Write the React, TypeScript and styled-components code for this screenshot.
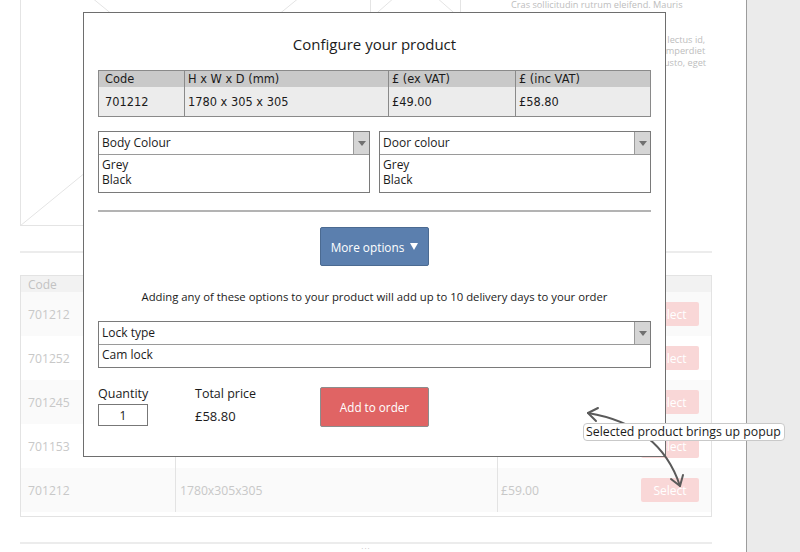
import styled, { createGlobalStyle } from 'styled-components';

const GlobalStyle = createGlobalStyle`
  * {
    box-sizing: border-box;
  }
  html,
  body {
    margin: 0;
    padding: 0;
    background: #ffffff;
  }
  body {
    font-family: 'Open Sans', 'Liberation Sans', sans-serif;
  }
`;

const Page = styled.div`
  position: relative;
  display: flex;
  width: 800px;
  height: 552px;
  overflow: hidden;
  background: #ffffff;
`;

const Main = styled.main`
  flex: none;
  width: 746px;
  padding: 0 34px 0 20px;
  display: flex;
  flex-direction: column;
`;

const Sidebar = styled.aside`
  flex: 1;
  background: #ebebeb;
  border-left: 1px solid #9c9c9c;
`;

/* faded page behind the popup */

const Hero = styled.section`
  flex: none;
  display: flex;
  align-items: flex-start;
  height: 287px;
  margin-top: -61px;
`;

const PlaceholderSvg = styled.svg<{ $overlap?: boolean }>`
  display: block;
  flex: none;
  margin-left: ${(p) => (p.$overlap ? '-1px' : '0')};
`;

const Blurb = styled.div`
  margin-left: 50px;
  padding-top: 60px;
  width: 220px;
  font-size: 9.2px;
  line-height: 11.5px;
  color: #bdbdbd;
  white-space: nowrap;
`;

const BlurbPara = styled.p`
  margin: 0 0 23px;
`;

const BlurbLine = styled.span`
  display: block;
`;

const Rule = styled.div<{ $top: number }>`
  flex: none;
  margin-top: ${(p) => p.$top}px;
  border-top: 2px solid #ececec;
`;

const ProductTable = styled.div`
  flex: none;
  margin-top: 22px;
  padding-bottom: 4px;
  border: 1px solid #e3e3e3;
`;

const ProductRow = styled.div<{ $head?: boolean; $shade?: boolean }>`
  display: grid;
  grid-template-columns: 154px 322px 1fr;
  height: ${(p) => (p.$head ? 16 : 44)}px;
  background: ${(p) => (p.$head ? '#f2f2f2' : p.$shade ? '#fafafa' : '#ffffff')};
  font-size: ${(p) => (p.$head ? 12 : 12.2)}px;
  color: ${(p) => (p.$head ? '#c2c2c2' : '#c8c8c8')};
`;

const ProductCell = styled.div<{ $pad: number; $divider?: boolean }>`
  display: flex;
  align-items: center;
  padding-left: ${(p) => p.$pad}px;
  border-left: ${(p) => (p.$divider ? '1px solid #e3e3e3' : 'none')};
`;

const PriceCell = styled(ProductCell)`
  justify-content: space-between;
  padding-right: 12px;
`;

const GhostSelect = styled.span`
  width: 58px;
  height: 24px;
  border-radius: 2px;
  background: #f9d7d7;
  color: #ffffff;
  font-size: 12px;
  display: flex;
  align-items: center;
  justify-content: center;
`;

const Dots = styled.div`
  margin-top: -2px;
  text-align: center;
  font-size: 8px;
  line-height: 8px;
  letter-spacing: 1px;
  color: #c4c4c4;
`;

/* popup */

const Modal = styled.div`
  position: absolute;
  left: 83px;
  top: 12px;
  width: 583px;
  display: flex;
  flex-direction: column;
  padding: 21px 14px 29px;
  background: #ffffff;
  border: 1px solid #6e6e6e;
  color: #1b1b1b;
`;

const Title = styled.h2`
  margin: 0 0 1px;
  font-size: 15px;
  font-weight: 400;
  line-height: 20px;
  text-align: center;
`;

const SpecTable = styled.div`
  display: grid;
  grid-template-columns: 85px 204px 127px 1fr;
  margin-top: 15px;
  border: 1px solid #8a8a8a;
  font-family: 'DejaVu Sans', 'Open Sans', sans-serif;
  font-size: 11.4px;
`;

const SpecCell = styled.div<{ $head?: boolean; $first?: boolean }>`
  display: flex;
  align-items: center;
  height: ${(p) => (p.$head ? 16 : 29)}px;
  padding-left: ${(p) => (p.$first ? 6 : 3)}px;
  background: ${(p) => (p.$head ? '#c9c9c9' : '#ececec')};
  border-left: ${(p) => (p.$first ? 'none' : '1px solid #8a8a8a')};
`;

const SelectRow = styled.div`
  display: flex;
  gap: 9px;
  margin-top: 14px;
`;

const SelectBox = styled.div<{ $top?: number }>`
  flex: 1;
  margin-top: ${(p) => p.$top ?? 0}px;
  border: 1px solid #7a7a7a;
  font-size: 12px;
  background: #ffffff;
`;

const SelectHead = styled.div`
  display: flex;
  height: 23px;
  border-bottom: 1px solid #9a9a9a;
`;

const SelectLabel = styled.span`
  flex: 1;
  padding-left: 3px;
  line-height: 22px;
`;

const SelectToggle = styled.span`
  width: 16px;
  display: flex;
  align-items: center;
  justify-content: center;
  background: #d5d5d5;
  border-left: 1px solid #9a9a9a;
`;

const Caret = styled.span<{ $color?: string; $w?: number; $h?: number }>`
  width: 0;
  height: 0;
  border-left: ${(p) => (p.$w ?? 9) / 2}px solid transparent;
  border-right: ${(p) => (p.$w ?? 9) / 2}px solid transparent;
  border-top: ${(p) => p.$h ?? 5}px solid ${(p) => p.$color ?? '#707070'};
`;

const SelectList = styled.div<{ $height: number }>`
  height: ${(p) => p.$height}px;
  padding: 2px 3px 0;
  line-height: 15px;
`;

const Separator = styled.div`
  margin-top: 17px;
  border-top: 2px solid #b3b3b3;
`;

const ActionButton = styled.button<{ $tone: 'blue' | 'red'; $top: number }>`
  flex: none;
  align-self: ${(p) => (p.$tone === 'blue' ? 'center' : 'flex-start')};
  display: flex;
  align-items: center;
  justify-content: center;
  gap: 6px;
  width: 109px;
  height: ${(p) => (p.$tone === 'blue' ? 39 : 40)}px;
  margin-top: ${(p) => p.$top}px;
  padding: 0;
  border: 1px solid ${(p) => (p.$tone === 'blue' ? '#4b6a91' : '#8c8c8c')};
  border-radius: 2px;
  background: ${(p) => (p.$tone === 'blue' ? '#5b7fae' : '#e06464')};
  color: #ffffff;
  font-family: inherit;
  font-size: ${(p) => (p.$tone === 'blue' ? 11.8 : 11.7)}px;
`;

const Note = styled.p`
  margin: 24px 0 0;
  font-size: 11.3px;
  line-height: 14px;
  text-align: center;
`;

const OrderRow = styled.div`
  display: flex;
  align-items: flex-start;
  margin-top: 19px;
`;

const Field = styled.div<{ $width: number }>`
  flex: none;
  width: ${(p) => p.$width}px;
  display: flex;
  flex-direction: column;
`;

const FieldLabel = styled.span`
  font-size: 12.5px;
  line-height: 14px;
`;

const QtyInput = styled.input`
  width: 50px;
  height: 22px;
  margin-top: 3px;
  padding: 0;
  border: 1px solid #777777;
  border-radius: 0;
  font-family: inherit;
  font-size: 12px;
  text-align: center;
  color: #1b1b1b;
  outline: none;
`;

const TotalValue = styled.span`
  margin-top: 7px;
  font-size: 13px;
  line-height: 16px;
`;

/* annotation */

const ArrowLayer = styled.svg`
  position: absolute;
  left: 0;
  top: 0;
  pointer-events: none;
`;

const Callout = styled.div`
  position: absolute;
  left: 583px;
  top: 423px;
  width: 202px;
  height: 18px;
  padding: 0 2px;
  background: #ffffff;
  border: 1px solid #c9c9c9;
  border-radius: 4px;
  font-size: 12.3px;
  line-height: 16px;
  color: #1b1b1b;
  white-space: nowrap;
`;

const Placeholder = ({ w, h, overlap }: { w: number; h: number; overlap?: boolean }) => (
  <PlaceholderSvg $overlap={overlap} width={w} height={h} viewBox={`0 0 ${w} ${h}`}>
    <rect x={0.5} y={0.5} width={w - 1} height={h - 1} fill="#ffffff" stroke="#e4e4e4" />
    <line x1={0} y1={0} x2={w} y2={h} stroke="#e4e4e4" />
    <line x1={0} y1={h} x2={w} y2={0} stroke="#e4e4e4" />
  </PlaceholderSvg>
);

const products = [
  { code: '701212', size: '1780x305x305', price: '£59.00' },
  { code: '701252', size: '1780x610x305', price: '£89.00' },
  { code: '701245', size: '1780x457x305', price: '£79.00' },
  { code: '701153', size: '1530x305x305', price: '£55.00' },
  { code: '701212', size: '1780x305x305', price: '£59.00' },
];

const Dropdown = ({ label, options, height, top }: { label: string; options: string[]; height: number; top?: number }) => (
  <SelectBox $top={top}>
    <SelectHead>
      <SelectLabel>{label}</SelectLabel>
      <SelectToggle>
        <Caret />
      </SelectToggle>
    </SelectHead>
    <SelectList $height={height}>
      {options.map((o) => (
        <div key={o}>{o}</div>
      ))}
    </SelectList>
  </SelectBox>
);

export default function App() {
  return (
    <Page>
      <GlobalStyle />
      <Main>
        <Hero>
          <Placeholder w={351} h={287} />
          <Placeholder w={91} h={80} overlap />
          <Blurb>
            <BlurbPara>
              <BlurbLine>Cras sollicitudin rutrum eleifend. Mauris</BlurbLine>
            </BlurbPara>
            <BlurbPara>
              <BlurbLine>Praesent tincidunt tellus sed nisl leo lectus id,</BlurbLine>
              <BlurbLine>Curabitur vestibulum mi vel magna imperdiet</BlurbLine>
              <BlurbLine>Vivamus a lacus non mauris mattis justo, eget</BlurbLine>
            </BlurbPara>
          </Blurb>
        </Hero>
        <Rule $top={25} />
        <ProductTable>
          <ProductRow $head>
            <ProductCell $pad={7}>Code</ProductCell>
            <ProductCell $pad={4}>H x W x D (mm)</ProductCell>
            <ProductCell $pad={3}>Price</ProductCell>
          </ProductRow>
          {products.map((p, i) => (
            <ProductRow key={i} $shade={i % 2 === 0}>
              <ProductCell $pad={7}>{p.code}</ProductCell>
              <ProductCell $pad={4} $divider>
                {p.size}
              </ProductCell>
              <PriceCell $pad={3} $divider>
                {p.price}
                <GhostSelect>Select</GhostSelect>
              </PriceCell>
            </ProductRow>
          ))}
        </ProductTable>
        <Rule $top={25} />
        <Dots>...</Dots>
      </Main>
      <Sidebar />

      <Modal>
        <Title>Configure your product</Title>
        <SpecTable>
          <SpecCell $head $first>Code</SpecCell>
          <SpecCell $head>H x W x D (mm)</SpecCell>
          <SpecCell $head>£ (ex VAT)</SpecCell>
          <SpecCell $head>£ (inc VAT)</SpecCell>
          <SpecCell $first>701212</SpecCell>
          <SpecCell>1780 x 305 x 305</SpecCell>
          <SpecCell>£49.00</SpecCell>
          <SpecCell>£58.80</SpecCell>
        </SpecTable>
        <SelectRow>
          <Dropdown label="Body Colour" options={['Grey', 'Black']} height={37} />
          <Dropdown label="Door colour" options={['Grey', 'Black']} height={37} />
        </SelectRow>
        <Separator />
        <ActionButton $tone="blue" $top={15}>
          More options
          <Caret $color="#ffffff" $w={9} $h={7} />
        </ActionButton>
        <Note>Adding any of these options to your product will add up to 10 delivery days to your order</Note>
        <Dropdown label="Lock type" options={['Cam lock']} height={22} top={17} />
        <OrderRow>
          <Field $width={97}>
            <FieldLabel>Quantity</FieldLabel>
            <QtyInput readOnly value="1" />
          </Field>
          <Field $width={125}>
            <FieldLabel>Total price</FieldLabel>
            <TotalValue>£58.80</TotalValue>
          </Field>
          <ActionButton $tone="red" $top={0}>
            Add to order
          </ActionButton>
        </OrderRow>
      </Modal>

      <ArrowLayer width={800} height={552} viewBox="0 0 800 552">
        <g fill="none" stroke="#5a5a5a" strokeWidth={2} strokeLinecap="round" strokeLinejoin="round">
          <path d="M588 413 Q660 425 680 486" />
          <path d="M598 408 L588 413 L596 421" />
          <path d="M671 479 L680 486 L683 475" />
        </g>
      </ArrowLayer>
      <Callout>Selected product brings up popup</Callout>
    </Page>
  );
}
